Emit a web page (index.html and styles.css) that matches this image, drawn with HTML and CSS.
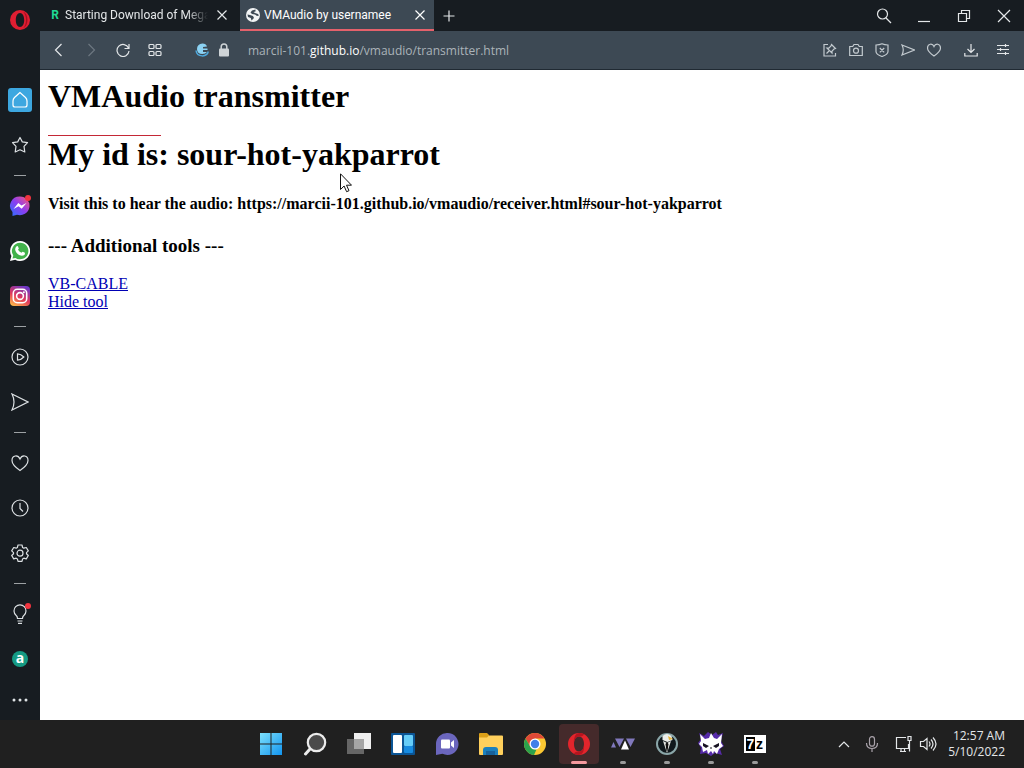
FILE: index.html
```html
<!DOCTYPE html>
<html lang="en">
<head>
    <meta charset="UTF-8">
    <meta name="viewport" content="width=device-width, initial-scale=1.0">
    <title>VMAudio by usernamee</title>
    <link rel="stylesheet" href="styles.css">
</head>
<body>
    <div class="browser">
        <nav class="sidebar" aria-label="Sidebar">
            <button class="opera-menu" aria-label="Opera menu">
                <svg width="20" height="20" viewBox="0 0 20 20"><path fill="#e01e32" fill-rule="evenodd" d="M10 0a10 10 0 1 0 0 20a10 10 0 0 0 0-20zM10 3c2.600 0 4.200 3 4.200 7s-1.600 7-4.200 7s-4.200-3-4.200-7s1.600-7 4.200-7z"/><path fill="#a70e20" d="M13 1.500c6 2.500 6 14 0 17c2-2 3-5 3-8.500s-1-6.500-3-8.500z"/></svg>
            </button>
            <button class="side-item" aria-label="Home">
                <span class="home"><svg class="line" width="18" height="18" viewBox="0 0 18 18"><path d="M9 1.500L3.500 6.500Q2 8 2 10v4q0 2 2 2h10q2 0 2-2v-4q0-2-1.500-3.500z"/></svg></span>
            </button>
            <button class="side-item" aria-label="Bookmarks"><svg class="line" width="18" height="18" viewBox="0 0 18 18"><path stroke-linejoin="round" d="M9 1.500l2.300 4.400 5.200.8-3.500 3.700.8 5.600L9 13.800 4.200 16l.8-5.600L1.500 6.700l5.200-.8z"/></svg></button>
            <hr class="divider">
            <button class="side-item" aria-label="Messenger">
                <svg width="22" height="22" viewBox="0 0 22 22"><defs><linearGradient id="msg" x1="0" y1="1" x2="1" y2="0"><stop offset="0" stop-color="#2872ff"/><stop offset=".5" stop-color="#8c3df0"/><stop offset="1" stop-color="#ff5a75"/></linearGradient></defs><path fill="url(#msg)" d="M11 1.500a9.700 9.300 0 1 1-3 18.200L3.500 21v-4A9.700 9.300 0 0 1 11 1.500z"/><path fill="#fff" d="M4.500 14l4.800-6 3.200 2.500 5-2.500-4.800 5.700-3.200-2.500z"/></svg>
                <span class="badge"></span>
            </button>
            <button class="side-item" aria-label="WhatsApp">
                <svg width="20" height="20" viewBox="0 0 20 20"><path fill="#fff" d="M10 0a10 10 0 1 1-4.800 18.700L0 20l1.400-5A10 10 0 0 1 10 0z"/><path fill="#42b24b" d="M10 1.700a8.300 8.300 0 1 1-4.500 15.200L2.500 17.600l.8-3A8.300 8.300 0 0 1 10 1.700z"/><path fill="#fff" d="M7 5q.7-.3 1 .4l.8 2q0 .5-.8 1.300 1.200 2.200 3.500 3 .9-1.200 1.400-1l2 1q.5 3-2.900 3C8 14.500 4.900 10.500 5.200 8q.2-2 1.800-3z"/></svg>
            </button>
            <button class="side-item" aria-label="Instagram">
                <svg width="20" height="20" viewBox="0 0 20 20"><defs><linearGradient id="insta" x1=".2" y1="1" x2=".7" y2="0"><stop offset="0" stop-color="#fdb64a"/><stop offset=".45" stop-color="#e2395b"/><stop offset="1" stop-color="#6d38c8"/></linearGradient></defs><rect width="20" height="20" rx="4" fill="url(#insta)"/><g fill="none" stroke="#fff" stroke-width="1.600"><rect x="3.300" y="3.300" width="13.400" height="13.400" rx="4"/><circle cx="10" cy="10" r="3.400"/></g><circle cx="13.900" cy="6.200" r="1" fill="#fff"/></svg>
            </button>
            <hr class="divider">
            <button class="side-item" aria-label="Player"><svg class="line" width="18" height="18" viewBox="0 0 18 18"><circle cx="9" cy="9" r="8"/><path d="M6.500 5.800v6.400q3.500-.2 6.300-3.200-2.800-3-6.300-3.200z"/></svg></button>
            <button class="side-item" aria-label="My Flow"><svg class="line" width="18" height="18" viewBox="0 0 18 18"><path d="M1 1l16 8-16 8q4-8 0-16z"/></svg></button>
            <hr class="divider">
            <button class="side-item" aria-label="Pinboards"><svg class="line" width="18" height="18" viewBox="0 0 18 18"><path d="M9 16.500Q1 11 1 6.500C1 1 7 .5 9 5c2-4.500 8-4 8 1.500Q17 11 9 16.500z"/></svg></button>
            <button class="side-item" aria-label="History"><svg class="line" width="18" height="18" viewBox="0 0 18 18"><circle cx="9" cy="9" r="8"/><path d="M9 4v5.500l3 3"/></svg></button>
            <button class="side-item" aria-label="Settings"><svg class="line" width="18" height="18" viewBox="0 0 18 18"><path stroke-linejoin="round" d="M7 1h4l.6 2.500 1.200.7 2.500-.7 2 3.400L15.500 8.600v1.200l1.800 1.700-2 3.400-2.500-.7-1.200.7L11 17.300H7l-.6-2.400-1.200-.7-2.500.7-2-3.400 1.800-1.700V8.600L.7 6.900l2-3.400 2.500.7 1.200-.7z"/><circle cx="9" cy="9.200" r="3"/></svg></button>
            <hr class="divider">
            <button class="side-item" aria-label="Tips">
                <svg class="line" width="18" height="20" viewBox="0 0 18 20"><path d="M6.500 14.500q0-2-1.500-3.200a6 6 0 1 1 8 0q-1.500 1.200-1.500 3.200zM6.500 17h5M7 19.300h4"/></svg>
                <span class="badge"></span>
            </button>
            <button class="side-item" aria-label="Amazon"><span class="amazon">a</span></button>
            <button class="more" aria-label="Sidebar setup"><svg width="18" height="4" viewBox="0 0 18 4" fill="#dfe3e6"><circle cx="3" cy="2" r="1.500"/><circle cx="9" cy="2" r="1.500"/><circle cx="15" cy="2" r="1.500"/></svg></button>
        </nav>

        <div class="window">
            <header class="tabbar">
                <div class="tab">
                    <span class="favicon">R</span>
                    <span class="tab-title faded">Starting Download of Mega</span>
                    <button class="icon" aria-label="Close tab"><svg class="line" width="10" height="10" viewBox="0 0 10 10"><path d="M.5.5l9 9M9.500.5l-9 9"/></svg></button>
                </div>
                <div class="tab active">
                    <svg class="favicon" width="14" height="14" viewBox="0 0 14 14"><circle cx="7" cy="7" r="7" fill="#f2f4f5"/><path fill="#3d4954" d="M1.500 6.500L4 7l3 1 1 2-2.500 2.500L4.800 10 2 9zM9.500 1.500L6 2.500 4.500 4.500 6 6l3 .5 2 1.500 2-.5-1-1.500-3-1-1.500-1 2-.5z"/></svg>
                    <span class="tab-title">VMAudio by usernamee</span>
                    <button class="icon" aria-label="Close tab"><svg class="line" width="10" height="10" viewBox="0 0 10 10"><path d="M.5.5l9 9M9.500.5l-9 9"/></svg></button>
                </div>
                <button class="icon new-tab" aria-label="New tab"><svg class="line" width="12" height="12" viewBox="0 0 12 12"><path d="M6 .5v11M.5 6h11"/></svg></button>
                <div class="window-buttons">
                    <button class="icon" aria-label="Search tabs"><svg class="line" width="16" height="16" viewBox="0 0 16 16"><circle cx="6.500" cy="6" r="5"/><path d="M10 10l5 5"/></svg></button>
                    <button class="icon" aria-label="Minimize"><svg class="line" width="14" height="14" viewBox="0 0 14 14"><path d="M1 12.500h12"/></svg></button>
                    <button class="icon" aria-label="Restore"><svg class="line" width="14" height="14" viewBox="0 0 14 14"><path d="M1.500 4.500h8v8h-8zM4.500 4.500v-3h8v8h-3"/></svg></button>
                    <button class="icon" aria-label="Close"><svg class="line" width="14" height="14" viewBox="0 0 14 14"><path d="M1 1l12 12M13 1L1 13"/></svg></button>
                </div>
            </header>

            <div class="toolbar">
                <div class="nav-buttons">
                    <button class="icon" aria-label="Back"><svg class="line" width="14" height="14" viewBox="0 0 14 14"><path d="M9.500 1l-6 6 6 6"/></svg></button>
                    <button class="icon" aria-label="Forward" disabled><svg class="line" width="14" height="14" viewBox="0 0 14 14"><path d="M4.500 1l6 6-6 6"/></svg></button>
                    <button class="icon" aria-label="Reload"><svg class="line" width="14" height="14" viewBox="0 0 14 14"><path d="M12.500 5A6 6 0 1 0 13 8M13 1v4.500H8.500"/></svg></button>
                    <button class="icon" aria-label="Speed dial"><svg class="line" width="14" height="14" viewBox="0 0 14 14"><rect x="1" y="1.500" width="5" height="4" rx="1"/><rect x="8" y="1.500" width="5" height="4" rx="1"/><rect x="1" y="8.500" width="5" height="4" rx="1"/><rect x="8" y="8.500" width="5" height="4" rx="1"/></svg></button>
                </div>
                <div class="address">
                    <svg width="14" height="14" viewBox="0 0 14 14"><path fill="#8bd2f3" d="M7.500.5Q11 .5 12 3.500L8 4v1.500h4.500v1.500H8V9h4q-1.500 2-4.500 2Q2 11 2 6T7.500.5z"/><path fill="none" stroke="#4eaadf" stroke-width="1.500" d="M1 7.500c1 7 11 7 12.300 1"/></svg>
                    <svg width="14" height="14" viewBox="0 0 14 14"><rect x="2" y="5.500" width="10" height="8" rx="1" fill="#cfd4d7"/><path fill="none" stroke="#cfd4d7" stroke-width="1.500" d="M4.200 6V3.800a2.800 2.800 0 0 1 5.600 0V6"/></svg>
                    <a class="url" href="#">marcii-101.<b>github.io</b>/vmaudio/transmitter.html</a>
                </div>
                <div class="page-buttons">
                    <button class="icon" aria-label="Edit pin"><svg class="line" width="14" height="14" viewBox="0 0 14 14"><path d="M5 1.500H1v11.500h11.500V10M3.500 10.500L6 8M8.500 1.500l4 4-1.500.5-2 2.200V10L4 5.200h1.800L8 3z"/></svg></button>
                    <button class="icon" aria-label="Snapshot"><svg class="line" width="14" height="14" viewBox="0 0 14 14"><path d="M.7 3.500h3L5 1.500h4l1.300 2h3v9H.7z"/><circle cx="7" cy="7.700" r="2.500"/></svg></button>
                    <button class="icon" aria-label="Ad blocker"><svg class="line" width="14" height="14" viewBox="0 0 14 14"><path d="M7 .8Q9.500 2 13 2v6.500q0 3-6 5-6-2-6-5V2q3.500 0 6-1.200zM4.800 5l4.400 4.400M9.200 5L4.800 9.400"/></svg></button>
                    <button class="icon" aria-label="Send"><svg class="line" width="14" height="14" viewBox="0 0 14 14"><path d="M1 2l12.500 5L1 12q2.500-5 0-10z"/></svg></button>
                    <button class="icon" aria-label="Add to pinboard"><svg class="line" width="14" height="14" viewBox="0 0 14 14"><path d="M7 13Q.5 8.500.5 5C.5.500 5.500 0 7 3.500 8.500 0 13.500.5 13.500 5 13.500 8.500 7 13 7 13z"/></svg></button>
                </div>
                <div class="menu-buttons">
                    <button class="icon" aria-label="Downloads"><svg class="line" width="14" height="14" viewBox="0 0 14 14"><path d="M7 1v8.500M3.500 6L7 9.500 10.500 6M.8 10v3h12.400v-3"/></svg></button>
                    <button class="icon" aria-label="Easy setup"><svg class="line" width="14" height="14" viewBox="0 0 14 14"><path d="M1 2.500h12M1 6.500h12M1 10.500h12M9.500 1v3M4.500 5v3M9.500 9v3"/></svg></button>
                </div>
            </div>

            <main class="page">
                <h1>VMAudio transmitter</h1>
                <div class="waveform"></div>
                <h1>My id is: sour-hot-yakparrot</h1>
                <h4>Visit this to hear the audio: https://marcii-101.github.io/vmaudio/receiver.html#sour-hot-yakparrot</h4>
                <h3>--- Additional tools ---</h3>
                <a href="#">VB-CABLE</a><br>
                <a href="#">Hide tool</a>
                <svg class="cursor" width="12" height="20" viewBox="0 0 12 20"><path fill="#fff" stroke="#111" d="M.5.800v15.700l3.600-3.500 2.500 5.700 2.400-1-2.500-5.500h5z"/></svg>
            </main>
        </div>
    </div>

    <footer class="taskbar">
        <div class="apps">
            <button class="app" aria-label="Start"><svg width="24" height="24" viewBox="0 0 24 24"><defs><linearGradient id="win" x1="0" y1="0" x2="1" y2="1"><stop offset="0" stop-color="#7de0fb"/><stop offset="1" stop-color="#1295f0"/></linearGradient></defs><path fill="url(#win)" d="M1 1h10.500v10.500H1zM12.500 1H23v10.500H12.500zM1 12.500h10.500V23H1zM12.500 12.500H23V23H12.500z"/></svg></button>
            <button class="app" aria-label="Search"><svg width="24" height="24" viewBox="0 0 24 24" stroke="#ececec"><path stroke-width="3" stroke-linecap="round" d="M7 17l-4.500 5"/><circle cx="13.500" cy="10.500" r="8.700" fill="#4b4b4b" stroke-width="2.200"/></svg></button>
            <button class="app" aria-label="Task view"><svg width="26" height="24" viewBox="0 0 26 24"><path fill="#efefef" d="M8 1h17v16H8z"/><path fill="#666" d="M1 7h17v15H1z"/><path fill="#a5a5a5" d="M8 7h10v10H8z"/></svg></button>
            <button class="app" aria-label="Widgets"><svg width="24" height="24" viewBox="0 0 24 24"><rect y="1" width="24" height="22" rx="1" fill="#0b5595"/><rect x="2" y="3" width="9" height="18" rx="1" fill="#fff"/><rect x="13" y="3" width="9" height="11" rx="1" fill="#65cdf8"/><rect x="13" y="14" width="9" height="7" rx="1" fill="#168be0"/></svg></button>
            <button class="app" aria-label="Chat"><svg width="24" height="24" viewBox="0 0 24 24"><path fill="#6b66bd" d="M12.500 1a11 11 0 1 1-5 20.800L1 23V12A11 11 0 0 1 12.500 1z"/><rect x="6" y="7.500" width="9" height="9" rx="1" fill="#fff"/><path fill="#fff" d="M16 10.500l3-2.500v8l-3-2.500z"/></svg></button>
            <button class="app" aria-label="File Explorer"><svg width="26" height="24" viewBox="0 0 26 24"><path fill="#dca018" d="M1 2q0-1 1-1h7l2 2v4H1z"/><path fill="#ffd05c" d="M1 5.500h8L11 3.500h13q1 0 1 1V22q0 1-1 1H2q-1 0-1-1z"/><path fill="#1b80bd" d="M5 23v-5q0-3 3-3h9q3 0 3 3v5z"/><path fill="#17619b" d="M8 19h9v4H8z"/></svg></button>
            <button class="app" aria-label="Chrome"><svg width="24" height="24" viewBox="0 0 24 24"><circle cx="12" cy="12" r="11" fill="#fbc832"/><path fill="#df4937" d="M2.500 6.500A11 11 0 0 1 21.500 6.500H12L7.200 14.800z"/><path fill="#2ba24c" d="M2.500 6.500l4.800 8.300L12 17.500h1.500L11 23A11 11 0 0 1 2.500 6.500z"/><circle cx="12" cy="12" r="5.500" fill="#fff"/><circle cx="12" cy="12" r="4.200" fill="#427fe8"/></svg></button>
            <button class="app current" aria-label="Opera"><svg width="24" height="24" viewBox="0 0 24 24"><path fill="#e3252c" fill-rule="evenodd" d="M12 1a11 11 0 1 0 0 22a11 11 0 0 0 0-22zM12 4.500c3 0 5 3 5 7.500s-2 7.500-5 7.500-5-3-5-7.500 2-7.500 5-7.500z"/><path fill="#b5151f" d="M12 1Q6 2 7 12q0-7.500 5-7.500 4 0 5-2.300Q15 1 12 1zM12 23q6-1 5-11 0 7.500-5 7.500-4 0-5 2.300Q9 23 12 23z"/></svg></button>
            <button class="app running" aria-label="Voicemeeter"><svg width="26" height="24" viewBox="0 0 26 24"><path fill="#8179bd" d="M1 15.500L3.500 10 6 15.500zM5 6.500h9L9.500 15zM16 6.500h9L20.500 15z"/><path fill="#fff" d="M11 17.500L15 8.500l4 9z"/></svg></button>
            <button class="app running" aria-label="Agent"><svg width="24" height="24" viewBox="0 0 24 24"><circle cx="12" cy="12" r="10" fill="#10181c" stroke="#8aa6a8" stroke-width="2"/><path fill="#eceeea" d="M7.500 4q4.500-4 9 0l1 4-5 2-5-2z"/><path fill="#e7e9e5" d="M8 9l4 12 4-12-4 2z"/><path fill="#111" d="M12 10l1.500 2-1 7h-1l-1-7z"/><path fill="#e7b539" d="M13 4l5 3-4 1z"/></svg></button>
            <button class="app running" aria-label="Monster"><svg width="26" height="26" viewBox="0 0 26 26"><path fill="#552aa8" d="M1 2l5 3 4-4 4 3 4-3 2 3 5-2-2 8 3 5-4 3 2 6-7-2-4 3-5-3-6 1 1-6-3-5 3-4z"/><path fill="#fff" d="M2 3l5 5 4-1 2-5 3 5 3 1 5-5-1 9 2 3-4 3-2 5-3-3-1 3-2-3-3 3-1-4-4 2-1-5-3-3 2-3z"/><path fill="#171222" d="M5 12l6 3-3 2-3-2zM21 12l-6 3 3 2 3-2zM12 17l1-1 1 1-1 1z"/></svg></button>
            <button class="app running" aria-label="7-Zip"><span class="zip"><b>7</b><i>z</i></span></button>
        </div>
        <div class="tray">
            <button class="icon chevron" aria-label="Show hidden icons"><svg class="line" width="12" height="12" viewBox="0 0 12 12"><path d="M1 9l5-5 5 5"/></svg></button>
            <button class="icon dim" aria-label="Microphone"><svg class="line" width="14" height="16" viewBox="0 0 14 16"><rect x="4.500" y=".7" width="5" height="9.500" rx="2.500"/><path d="M1.500 7q0 5.500 5.500 5.500T12.500 7M7 12.500V16"/></svg></button>
            <button class="icon" aria-label="Network"><svg class="line" width="18" height="18" viewBox="0 0 18 18"><path d="M11 2.500H1.500v11h12V9M5 16.500h6M6 13.500v3M9.500 13.500v3M13 1.500h3v4h-3zM14.500 5.500v11"/></svg></button>
            <button class="icon" aria-label="Volume"><svg class="line" width="18" height="16" viewBox="0 0 18 16"><path d="M1.500 5.500h3l3.500-3v11l-3.500-3h-3zM10 5.500q2 2.500 0 5M12 3.500q4 4.500 0 9M14 1.500q6 6.500 0 13"/></svg></button>
            <div class="clock">12:57 AM<br>5/10/2022</div>
        </div>
    </footer>
</body>
</html>
```

FILE: styles.css
```css
* {
    box-sizing: border-box;
}
body {
    margin: 0;
    height: 100vh;
    display: flex;
    flex-direction: column;
    overflow: hidden;
    font-family: "Open Sans", "Noto Sans", sans-serif;
    font-size: 12px;
    color: #e4e7e9;
    background: #171c21;
}
button {
    display: flex;
    align-items: center;
    justify-content: center;
    padding: 0;
    border: none;
    background: none;
    color: inherit;
    font: inherit;
}
svg {
    flex: none;
}
.line {
    fill: none;
    stroke: currentColor;
    stroke-width: 1.2;
}
.browser {
    flex: 1;
    display: flex;
    min-height: 0;
}

/* left sidebar */
.sidebar {
    width: 40px;
    display: flex;
    flex-direction: column;
    color: #dce0e3;
}
.opera-menu {
    height: 40px;
    margin-bottom: 37px;
}
.side-item {
    position: relative;
    height: 45px;
}
.more {
    height: 38px;
}
.divider {
    width: 12px;
    height: 1px;
    margin: 8px auto 7px;
    border: none;
    background: #9da1a4;
}
.home {
    display: flex;
    align-items: center;
    justify-content: center;
    width: 24px;
    height: 24px;
    border-radius: 3px;
    background: #3da7e0;
    color: #fff;
}
.badge {
    position: absolute;
    top: 12px;
    right: 9px;
    width: 6px;
    height: 6px;
    border-radius: 50%;
    background: #f0343f;
}
.amazon {
    width: 16px;
    height: 16px;
    border-radius: 50%;
    background: #159a83;
    color: #fff;
    font-size: 14px;
    font-weight: bold;
    line-height: 14px;
}

/* tabs */
.window {
    flex: 1;
    min-width: 0;
    display: flex;
    flex-direction: column;
}
.tabbar {
    display: flex;
    height: 31px;
    padding-left: 3px;
}
.tab {
    display: flex;
    align-items: center;
    width: 197px;
    padding: 0 12px 0 7px;
    border-bottom: 2px solid transparent;
    font-family: Roboto, "Open Sans", sans-serif;
}
.tab.active {
    width: 194px;
    padding: 0 8px 0 6px;
    background: #3d4954;
    border-color: #e5616b;
    color: #fff;
}
.favicon {
    width: 14px;
    margin-right: 4px;
}
span.favicon {
    width: 10px;
    margin-right: 5px;
    color: #1fd995;
    font-weight: bold;
    text-align: center;
}
.tab-title {
    flex: 1;
    overflow: hidden;
    white-space: nowrap;
}
.faded {
    mask-image: linear-gradient(to right, #000 85%, transparent);
}
.tab .icon {
    width: 12px;
    margin-left: 8px;
}
.new-tab {
    width: 30px;
}
.window-buttons {
    display: flex;
    margin-left: auto;
}
.window-buttons .icon {
    width: 40px;
}

/* address bar */
.toolbar {
    display: flex;
    align-items: center;
    height: 39px;
    padding: 0 5px 0 3px;
    background: #3d4954;
    border-bottom: 1px solid #202a33;
}
.nav-buttons {
    display: flex;
}
.nav-buttons .icon {
    width: 32px;
}
.icon:disabled {
    color: #6d7780;
}
.address {
    flex: 1;
    display: flex;
    align-items: center;
    gap: 8px;
    padding-left: 24px;
}
.url {
    margin-left: 9px;
    color: #abb3b9;
    text-decoration: none;
}
.url b {
    color: #fff;
    font-weight: normal;
}
.page-buttons {
    display: flex;
    color: #c3cacf;
}
.page-buttons .icon {
    width: 26px;
}
.menu-buttons {
    display: flex;
    margin-left: 8px;
}
.menu-buttons .icon {
    width: 32px;
}

/* page */
.page {
    position: relative;
    flex: 1;
    padding: 8px;
    background: #fff;
    color: #000;
    font: 16px/18px "Liberation Serif", "Times New Roman", serif;
}
h1 {
    margin: 0;
    font-size: 32px;
    line-height: 37px;
}
.waveform {
    width: 113px;
    height: 1px;
    margin: 20px 0 0;
    background: #c42836;
}
h4 {
    margin: 22px 0 22px;
    font-size: 16px;
}
h3 {
    margin: 0 0 19px;
    font-size: 19px;
    line-height: 21px;
}
.page a {
    color: #0000b4;
}
.cursor {
    position: absolute;
    top: 103px;
    left: 300px;
}

/* taskbar */
.taskbar {
    display: grid;
    grid-template-columns: 1fr auto 1fr;
    height: 48px;
    padding-left: 2px;
    background: #202020;
}
.apps {
    grid-column: 2;
    display: flex;
}
.app {
    position: relative;
    width: 40px;
    height: 40px;
    margin: 4px 2px;
    border-radius: 4px;
}
.app.current {
    background: #452a2b;
}
.app.current::after,
.app.running::after {
    content: "";
    position: absolute;
    bottom: 0;
    width: 6px;
    height: 3px;
    border-radius: 2px;
    background: #9a9a9a;
}
.app.current::after {
    width: 16px;
    background: #f59a9f;
}
.zip {
    display: flex;
    align-items: center;
    justify-content: center;
    width: 22px;
    height: 18px;
    border: 2px solid #fff;
    background: #fff;
    color: #000;
    font: bold 14px/14px "Liberation Sans", Arial, sans-serif;
}
.zip b {
    width: 9px;
    background: #000;
    color: #fff;
}
.zip i {
    width: 9px;
    font-style: normal;
}
.tray {
    display: flex;
    align-items: center;
    justify-content: flex-end;
    padding-right: 19px;
}
.tray .icon {
    width: 24px;
}
.tray .chevron {
    width: 16px;
}
.tray .dim {
    width: 40px;
    color: #a9a2aa;
}
.clock {
    margin-left: 8px;
    line-height: 16px;
    text-align: right;
}
```
